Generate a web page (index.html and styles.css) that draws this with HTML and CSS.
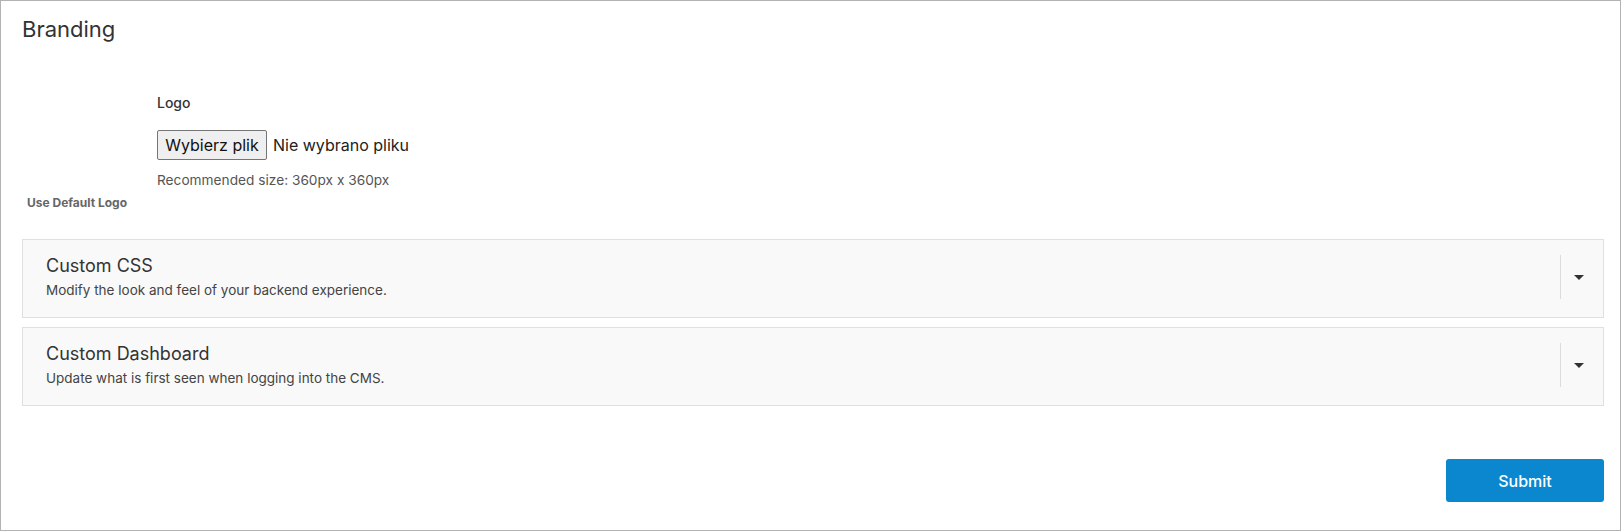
FILE: index.html
```html
<!DOCTYPE html>
<html lang="pl">
<head>
<meta charset="utf-8">
<title>Branding</title>
<link rel="stylesheet" href="styles.css">
</head>
<body>
<div class="page">
  <h1 class="title">Branding</h1>
  <div class="logo-row">
    <div class="logo-side"><span class="side-label">Use Default Logo</span></div>
    <div class="logo-field">
      <div class="field-label">Logo</div>
      <div class="file-input">
        <button type="button" class="file-btn">Wybierz plik</button>
        <span class="file-name">Nie wybrano pliku</span>
      </div>
      <div class="hint">Recommended size: 360px x 360px</div>
    </div>
  </div>
  <div class="panels">
    <div class="panel">
      <div class="panel-text">
        <div class="panel-title">Custom CSS</div>
        <div class="panel-desc">Modify the look and feel of your backend experience.</div>
      </div>
      <div class="panel-toggle"><span class="caret"></span></div>
    </div>
    <div class="panel">
      <div class="panel-text">
        <div class="panel-title">Custom Dashboard</div>
        <div class="panel-desc">Update what is first seen when logging into the CMS.</div>
      </div>
      <div class="panel-toggle"><span class="caret"></span></div>
    </div>
  </div>
  <div class="actions">
    <button type="button" class="submit">Submit</button>
  </div>
</div>
</body>
</html>
```
FILE: styles.css
```css
* { box-sizing: border-box; }
html, body { margin: 0; padding: 0; background: #fff; }
body { font-family: Inter, "Noto Sans", sans-serif; color: #333; }

.page {
  width: 1621px;
  height: 531px;
  border: 1px solid #b3b3b3;
  padding: 0 16px 0 21px;
  overflow: hidden;
}

.title {
  margin: 13px 0 0;
  font-size: 22px;
  line-height: 30px;
  font-weight: 400;
  color: #333;
}

.logo-row {
  display: flex;
  margin-top: 51px;
}
.logo-side {
  width: 135px;
  padding: 101px 0 0 5px;
}
.side-label {
  display: block;
  font-size: 12px;
  line-height: 14px;
  font-weight: 700;
  color: #666;
  white-space: nowrap;
}
.field-label {
  font-size: 14px;
  line-height: 16px;
  font-weight: 500;
  color: #333;
}
.file-input {
  display: flex;
  align-items: center;
  margin-top: 19px;
  height: 30px;
}
.file-btn {
  height: 30px;
  width: 110px;
  padding: 0;
  font-family: Inter, "Noto Sans", sans-serif;
  font-size: 16px;
  color: #111;
  background: #efefef;
  border: 1px solid #767676;
  border-radius: 2px;
}
.file-name {
  margin-left: 6px;
  font-size: 16px;
  color: #222;
}
.hint {
  margin-top: 12px;
  font-size: 13.7px;
  line-height: 16px;
  color: #555;
}

.panels {
  margin-top: 29px;
  display: flex;
  flex-direction: column;
  gap: 9px;
}
.panel {
  display: flex;
  align-items: center;
  background: #f9f9f9;
  border: 1px solid #e0e0e0;
  padding: 15px 6px 18px 23px;
}
.panel-text {
  flex: 1;
  align-self: flex-start;
}
.panel-title {
  font-size: 18px;
  line-height: 22px;
  color: #333;
  margin-bottom: 5px;
}
.panel-desc {
  font-size: 13.5px;
  line-height: 16px;
  color: #444;
}
.panel-toggle {
  width: 37px;
  height: 44px;
  border-left: 1px solid #dcdcdc;
  display: flex;
  align-items: center;
  justify-content: center;
}
.caret {
  width: 0;
  height: 0;
  border-left: 5px solid transparent;
  border-right: 5px solid transparent;
  border-top: 5px solid #333;
}

.actions {
  display: flex;
  justify-content: flex-end;
  margin-top: 53px;
}
.submit {
  width: 158px;
  height: 43px;
  background: #0b87cf;
  color: #fff;
  border: 0;
  border-radius: 3px;
  font-family: Inter, "Noto Sans", sans-serif;
  font-size: 16px;
  font-weight: 500;
}
```
